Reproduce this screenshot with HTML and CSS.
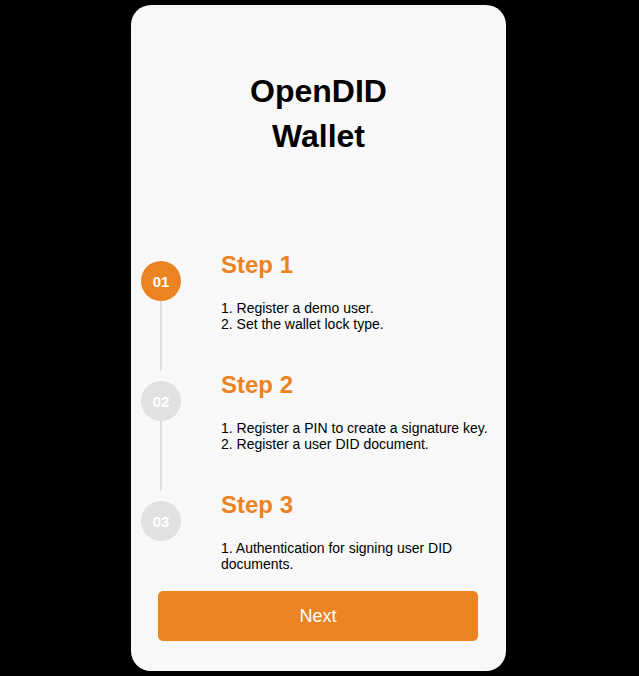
FILE: index.html
```html
<!DOCTYPE html>
<html lang="en">
<head>
<meta charset="utf-8">
<title>OpenDID Wallet</title>
<link rel="stylesheet" href="styles.css">
</head>
<body>
  <main class="card">
    <h1 class="title">OpenDID<br>Wallet</h1>
    <ol class="steps">
      <li class="step step-active">
        <div class="marker">
          <span class="circle">01</span>
          <span class="line"></span>
        </div>
        <div class="step-body">
          <h2 class="step-title">Step 1</h2>
          <p class="step-desc">1. Register a demo user.<br>2. Set the wallet lock type.</p>
        </div>
      </li>
      <li class="step">
        <div class="marker">
          <span class="circle">02</span>
          <span class="line"></span>
        </div>
        <div class="step-body">
          <h2 class="step-title">Step 2</h2>
          <p class="step-desc">1. Register a PIN to create a signature key.<br>2. Register a user DID document.</p>
        </div>
      </li>
      <li class="step step-last">
        <div class="marker">
          <span class="circle">03</span>
        </div>
        <div class="step-body">
          <h2 class="step-title">Step 3</h2>
          <p class="step-desc">1. Authentication for signing user DID documents.</p>
        </div>
      </li>
    </ol>
    <button class="next-btn" type="button">Next</button>
  </main>
</body>
</html>
```

FILE: styles.css
```css
html, body {
  height: 100%;
}

body {
  margin: 0;
  padding-right: 2px;
  box-sizing: border-box;
  background: #000;
  display: flex;
  justify-content: center;
  align-items: center;
  font-family: "Liberation Sans", Arial, Helvetica, sans-serif;
}

.card {
  width: 375px;
  height: 666px;
  box-sizing: border-box;
  background: #f8f8f8;
  border-radius: 20px;
  display: flex;
  flex-direction: column;
  padding: 64px 0 30px;
}

.title {
  margin: 0;
  text-align: center;
  font-size: 32px;
  line-height: 45px;
  font-weight: 700;
  color: #000;
}

.steps {
  list-style: none;
  margin: 92px 0 0;
  padding: 0 16px 0 10px;
}

.step {
  display: flex;
  height: 120px;
}

.step-last {
  height: auto;
}

.marker {
  width: 40px;
  flex-shrink: 0;
  display: flex;
  flex-direction: column;
  align-items: center;
  padding-top: 10px;
  margin-right: 40px;
}

.circle {
  width: 40px;
  height: 40px;
  flex-shrink: 0;
  border-radius: 50%;
  background: #e1e1e1;
  color: #fff;
  font-size: 15px;
  font-weight: 700;
  display: flex;
  align-items: center;
  justify-content: center;
}

.step-active .circle {
  background: #ec8323;
}

.line {
  width: 2px;
  flex: 1;
  background: #dedede;
}

.step-body {
  flex: 1;
  min-width: 0;
}

.step-title {
  margin: 0;
  font-size: 24px;
  font-weight: 700;
  color: #ec8323;
  line-height: 28px;
}

.step-desc {
  margin: 21px 0 0;
  font-size: 14px;
  line-height: 16px;
  color: #000;
}

.next-btn {
  margin: auto 28px 0 27px;
  height: 50px;
  border: none;
  border-radius: 5px;
  background: #ec8323;
  color: #fff;
  font-family: inherit;
  font-size: 18px;
  cursor: pointer;
}
```
